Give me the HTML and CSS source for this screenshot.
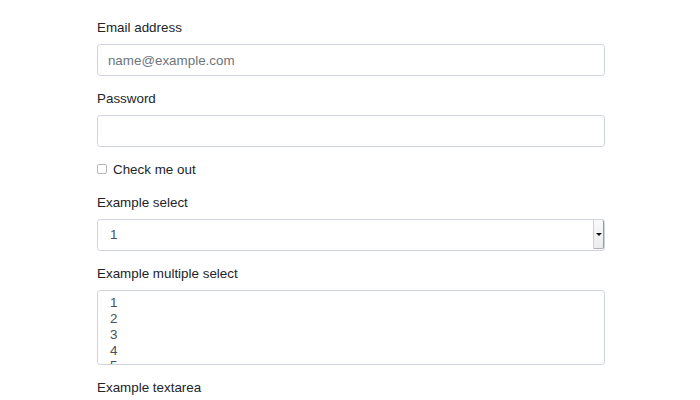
FILE: index.html
```html
<!DOCTYPE html>
<html lang="en">
<head>
<meta charset="utf-8">
<title>Form</title>
<link rel="stylesheet" href="styles.css">
</head>
<body>
<form class="form">
  <div class="group">
    <label class="label" for="email">Email address</label>
    <input class="control" type="email" id="email" placeholder="name@example.com">
  </div>
  <div class="group">
    <label class="label" for="pw">Password</label>
    <input class="control" type="password" id="pw">
  </div>
  <div class="group check">
    <input class="check-input" type="checkbox" id="chk">
    <label class="check-label" for="chk">Check me out</label>
  </div>
  <div class="group">
    <label class="label" for="sel">Example select</label>
    <div class="select-wrap">
      <select class="control select" id="sel">
        <option>1</option><option>2</option><option>3</option><option>4</option><option>5</option>
      </select>
      <span class="select-btn"><span class="caret"></span></span>
    </div>
  </div>
  <div class="group">
    <label class="label" for="multi">Example multiple select</label>
    <select class="control multi" id="multi" multiple>
      <option>1</option><option>2</option><option>3</option><option>4</option><option>5</option>
    </select>
  </div>
  <div class="group">
    <label class="label" for="ta">Example textarea</label>
    <textarea class="control area" id="ta" rows="3"></textarea>
  </div>
</form>
</body>
</html>
```
FILE: styles.css
```css
html, body {
  margin: 0;
  padding: 0;
  background: #fff;
}
body {
  font-family: "Liberation Sans", Arial, sans-serif;
  font-size: 13.4px;
  line-height: 19.8px;
  color: #212529;
}
.form {
  width: 508px;
  margin: 0 auto;
  padding-top: 18px;
  box-sizing: border-box;
  position: relative;
  left: 1px;
}
.group {
  margin-bottom: 13.2px;
}
.label {
  display: block;
  margin-bottom: 6.6px;
}
.control {
  display: block;
  box-sizing: border-box;
  width: 100%;
  height: 31.4px;
  margin: 0;
  padding: 4.95px 9.9px;
  font-family: inherit;
  font-size: 13.4px;
  line-height: 19.8px;
  color: #495057;
  background: #fff;
  border: 1px solid #ced4da;
  border-radius: 3.3px;
  outline: none;
}
.control::placeholder {
  color: #6c757d;
  opacity: 1;
}
.check {
  display: flex;
  align-items: center;
  height: 19.8px;
}
.check-input {
  appearance: none;
  -webkit-appearance: none;
  width: 10px;
  height: 10px;
  margin: 0 6px 0 0;
  border: 1px solid #b8b8b8;
  border-radius: 2px;
  background: #fff;
  position: relative;
  top: -1px;
}
.select-wrap {
  position: relative;
}
.select {
  appearance: none;
  -webkit-appearance: none;
  padding-left: 12px;
}
.select-btn {
  position: absolute;
  top: 1px;
  right: 1px;
  width: 11px;
  height: 29px;
  box-sizing: border-box;
  background: linear-gradient(#fafafa, #ececec);
  border-left: 1px solid #cfcfcf;
  border-right: 1px solid #9a9a9a;
  border-bottom: 1px solid #b0b0b0;
  display: flex;
  align-items: center;
  justify-content: center;
  border-radius: 0 2px 2px 0;
}
.caret {
  width: 0;
  height: 0;
  border-left: 3px solid transparent;
  border-right: 3px solid transparent;
  border-top: 3px solid #111;
}
.multi {
  height: 74.5px;
  padding: 4px 12px 0;
  overflow: hidden;
}
.multi option {
  padding: 0;
  height: 15.8px;
  line-height: 15.8px;
  min-height: 15.8px;
  color: #495057;
}
.area {
  height: 70px;
  resize: vertical;
}
```
